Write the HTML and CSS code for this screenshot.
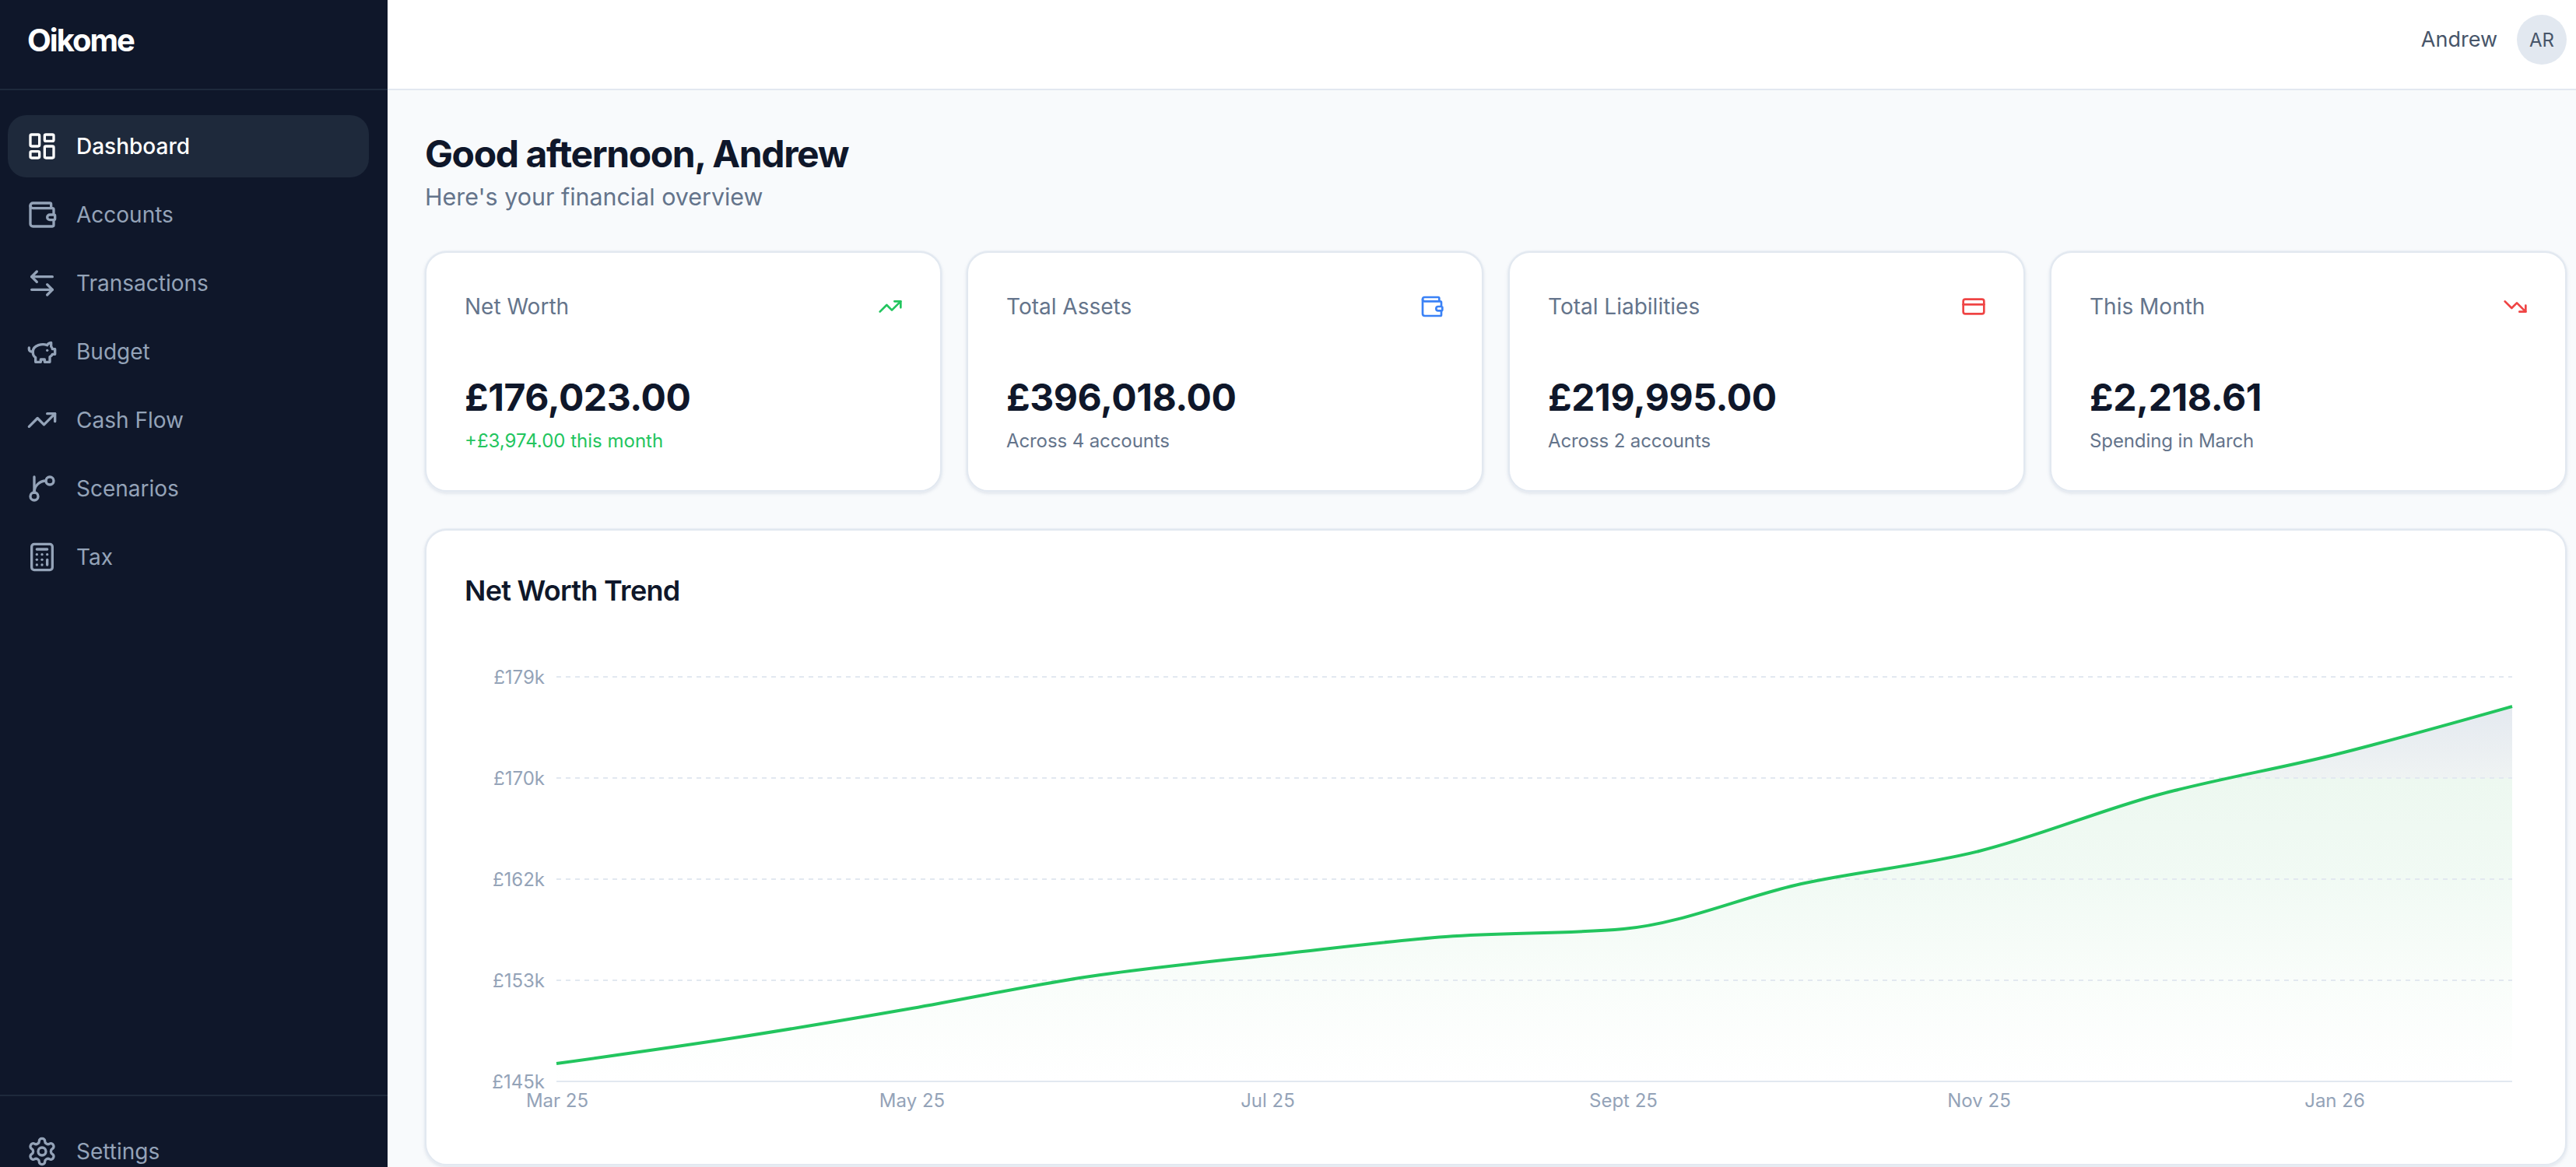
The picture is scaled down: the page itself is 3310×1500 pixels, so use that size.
FILE: index.html
```html
<!DOCTYPE html>
<html lang="en">
<head>
<meta charset="utf-8">
<title>Oikome</title>
<link rel="stylesheet" href="styles.css">
</head>
<body>
<div class="app">
  <aside class="sidebar">
    <div class="brand">Oikome</div>
    <nav class="nav">
      <a class="nav-item active"><svg class="icon" viewBox="0 0 24 24"><rect x="3" y="3" width="7" height="9" rx="1"/><rect x="14" y="3" width="7" height="5" rx="1"/><rect x="14" y="12" width="7" height="9" rx="1"/><rect x="3" y="16" width="7" height="5" rx="1"/></svg><span>Dashboard</span></a>
      <a class="nav-item"><svg class="icon" viewBox="0 0 24 24"><path d="M19 7V4a1 1 0 0 0-1-1H5a2 2 0 0 0 0 4h15a1 1 0 0 1 1 1v4h-3a2 2 0 0 0 0 4h3a1 1 0 0 0 1-1v-2a1 1 0 0 0-1-1"/><path d="M3 5v14a2 2 0 0 0 2 2h15a1 1 0 0 0 1-1v-4"/></svg><span>Accounts</span></a>
      <a class="nav-item"><svg class="icon" viewBox="0 0 24 24"><path d="M8 3 4 7l4 4"/><path d="M4 7h16"/><path d="m16 21 4-4-4-4"/><path d="M20 17H4"/></svg><span>Transactions</span></a>
      <a class="nav-item"><svg class="icon" viewBox="0 0 24 24"><path d="M19 5c-1.5 0-2.8 1.4-3 2-3.5-1.5-11-.3-11 5 0 1.8 0 3 2 4.5V20h4v-2h3v2h4v-4c1-.5 1.7-1 2-2h2v-4h-2c0-1-.5-1.5-1-2V5z"/><path d="M2 9v1c0 1.1.9 2 2 2h1"/><path d="M16 11h.01"/></svg><span>Budget</span></a>
      <a class="nav-item"><svg class="icon" viewBox="0 0 24 24"><path d="M22 7 13.5 15.5 8.5 10.5 2 17"/><path d="M16 7h6v6"/></svg><span>Cash Flow</span></a>
      <a class="nav-item"><svg class="icon" viewBox="0 0 24 24"><path d="M6 3v12"/><circle cx="18" cy="6" r="3"/><circle cx="6" cy="18" r="3"/><path d="M15 6a9 9 0 0 0-9 9"/></svg><span>Scenarios</span></a>
      <a class="nav-item"><svg class="icon" viewBox="0 0 24 24"><rect x="4" y="2" width="16" height="20" rx="2"/><path d="M8 6h8"/><path d="M16 14v4"/><path d="M16 10h.01"/><path d="M12 10h.01"/><path d="M8 10h.01"/><path d="M12 14h.01"/><path d="M8 14h.01"/><path d="M12 18h.01"/><path d="M8 18h.01"/></svg><span>Tax</span></a>
    </nav>
    <div class="sidebar-foot">
      <a class="nav-item"><svg class="icon" viewBox="0 0 24 24"><path d="M12.22 2h-.44a2 2 0 0 0-2 2v.18a2 2 0 0 1-1 1.73l-.43.25a2 2 0 0 1-2 0l-.15-.08a2 2 0 0 0-2.73.73l-.22.38a2 2 0 0 0 .73 2.73l.15.1a2 2 0 0 1 1 1.72v.51a2 2 0 0 1-1 1.74l-.15.09a2 2 0 0 0-.73 2.73l.22.38a2 2 0 0 0 2.73.73l.15-.08a2 2 0 0 1 2 0l.43.25a2 2 0 0 1 1 1.73V20a2 2 0 0 0 2 2h.44a2 2 0 0 0 2-2v-.18a2 2 0 0 1 1-1.73l.43-.25a2 2 0 0 1 2 0l.15.08a2 2 0 0 0 2.73-.73l.22-.39a2 2 0 0 0-.73-2.73l-.15-.08a2 2 0 0 1-1-1.74v-.5a2 2 0 0 1 1-1.74l.15-.09a2 2 0 0 0 .73-2.73l-.22-.38a2 2 0 0 0-2.73-.73l-.15.08a2 2 0 0 1-2 0l-.43-.25a2 2 0 0 1-1-1.73V4a2 2 0 0 0-2-2z"/><circle cx="12" cy="12" r="3"/></svg><span>Settings</span></a>
    </div>
  </aside>
  <div class="main">
    <header class="topbar">
      <span class="user-name">Andrew</span>
      <span class="avatar">AR</span>
    </header>
    <main class="content">
      <h1 class="title">Good afternoon, Andrew</h1>
      <p class="subtitle">Here's your financial overview</p>
      <section class="stats">
        <article class="card stat">
          <div class="stat-head"><span class="stat-label">Net Worth</span><svg class="stat-icon green" viewBox="0 0 24 24"><path d="M22 7 13.5 15.5 8.5 10.5 2 17"/><path d="M16 7h6v6"/></svg></div>
          <div class="stat-value">£176,023.00</div>
          <div class="stat-note green-text">+£3,974.00 this month</div>
        </article>
        <article class="card stat">
          <div class="stat-head"><span class="stat-label">Total Assets</span><svg class="stat-icon blue" viewBox="0 0 24 24"><path d="M19 7V4a1 1 0 0 0-1-1H5a2 2 0 0 0 0 4h15a1 1 0 0 1 1 1v4h-3a2 2 0 0 0 0 4h3a1 1 0 0 0 1-1v-2a1 1 0 0 0-1-1"/><path d="M3 5v14a2 2 0 0 0 2 2h15a1 1 0 0 0 1-1v-4"/></svg></div>
          <div class="stat-value">£396,018.00</div>
          <div class="stat-note">Across 4 accounts</div>
        </article>
        <article class="card stat">
          <div class="stat-head"><span class="stat-label">Total Liabilities</span><svg class="stat-icon red" viewBox="0 0 24 24"><rect x="2" y="5" width="20" height="14" rx="2"/><path d="M2 10h20"/></svg></div>
          <div class="stat-value">£219,995.00</div>
          <div class="stat-note">Across 2 accounts</div>
        </article>
        <article class="card stat">
          <div class="stat-head"><span class="stat-label">This Month</span><svg class="stat-icon red" viewBox="0 0 24 24"><path d="M22 17 13.5 8.5 8.5 13.5 2 7"/><path d="M16 17h6v-6"/></svg></div>
          <div class="stat-value">£2,218.61</div>
          <div class="stat-note">Spending in March</div>
        </article>
      </section>
      <section class="card chart-card">
        <h2 class="chart-title">Net Worth Trend</h2>
        <svg class="chart" viewBox="597 820 2650 640" width="2650" height="640">
          <defs>
            <linearGradient id="areaFill" gradientUnits="userSpaceOnUse" x1="0" y1="908" x2="0" y2="1389">
              <stop offset="0" stop-color="#e4e9f0"/>
              <stop offset="0.191" stop-color="#eff3f3"/>
              <stop offset="0.191" stop-color="#edf8f0"/>
              <stop offset="0.46" stop-color="#f1faf4"/>
              <stop offset="0.73" stop-color="#f9fdfa"/>
              <stop offset="1" stop-color="#ffffff"/>
            </linearGradient>
          </defs>
          <path class="area" d="M715 1367C791.2 1356.4 867.3 1345.8 943.5 1334C1019.7 1322.2 1095.8 1309.3 1172 1296C1248.2 1282.7 1324.3 1266.3 1400.5 1255C1476.7 1243.7 1552.8 1236.3 1629 1228C1705.2 1219.7 1781.3 1209.7 1857.5 1204C1933.7 1198.3 2009.8 1200.7 2086 1194C2162.2 1187.3 2238.3 1152.7 2314.5 1136C2390.7 1119.3 2466.8 1113 2543 1094C2619.2 1075 2695.3 1042.7 2771.5 1022C2847.7 1001.3 2923.8 989 3000 970C3076.2 951 3152 929.5 3228 908V1389H715Z"/>
          <path class="grid" d="M715 870H3228M715 1000H3228M715 1130H3228M715 1260H3228"/>
          <path class="axis" d="M715 1390H3228"/>
          <path class="line" d="M715 1367C791.2 1356.4 867.3 1345.8 943.5 1334C1019.7 1322.2 1095.8 1309.3 1172 1296C1248.2 1282.7 1324.3 1266.3 1400.5 1255C1476.7 1243.7 1552.8 1236.3 1629 1228C1705.2 1219.7 1781.3 1209.7 1857.5 1204C1933.7 1198.3 2009.8 1200.7 2086 1194C2162.2 1187.3 2238.3 1152.7 2314.5 1136C2390.7 1119.3 2466.8 1113 2543 1094C2619.2 1075 2695.3 1042.7 2771.5 1022C2847.7 1001.3 2923.8 989 3000 970C3076.2 951 3152 929.5 3228 908"/>
          <text class="tick y" x="700" y="879">£179k</text>
          <text class="tick y" x="700" y="1009">£170k</text>
          <text class="tick y" x="700" y="1139">£162k</text>
          <text class="tick y" x="700" y="1269">£153k</text>
          <text class="tick y" x="700" y="1399">£145k</text>
          <text class="tick x" x="716" y="1423">Mar 25</text>
          <text class="tick x" x="1172" y="1423">May 25</text>
          <text class="tick x" x="1629" y="1423">Jul 25</text>
          <text class="tick x" x="2086" y="1423">Sept 25</text>
          <text class="tick x" x="2543" y="1423">Nov 25</text>
          <text class="tick x" x="3000" y="1423">Jan 26</text>
        </svg>
      </section>
    </main>
  </div>
</div>
</body>
</html>
```

FILE: styles.css
```css
* { box-sizing: border-box; }
html, body { margin: 0; height: 100%; overflow: hidden; }
body {
  font-family: Inter, "Liberation Sans", sans-serif;
  background: #f8fafc;
  color: #0f172a;
}
.app { display: flex; height: 1540px; }

.sidebar {
  width: 498px;
  flex: none;
  display: flex;
  flex-direction: column;
  background: #0f172a;
}
.brand {
  height: 116px;
  padding: 28px 35px 0;
  border-bottom: 2px solid #1e293b;
  color: #fff;
  font-size: 40px;
  line-height: 48px;
  font-weight: 700;
  letter-spacing: -2px;
}
.nav {
  flex: 1;
  display: flex;
  flex-direction: column;
  gap: 8px;
  padding: 32px 24px 0 10px;
}
.nav-item {
  display: flex;
  align-items: center;
  gap: 24px;
  height: 80px;
  padding: 0 24px;
  border-radius: 24px;
  color: #94a3b8;
  font-size: 28px;
  font-weight: 400;
}
.nav-item.active { background: #1e293b; color: #fff; font-weight: 500; }
.icon, .stat-icon {
  flex: none;
  fill: none;
  stroke: currentColor;
  stroke-width: 2;
  stroke-linecap: round;
  stroke-linejoin: round;
}
.icon { width: 40px; height: 40px; }
.sidebar-foot {
  height: 133px;
  padding: 31px 24px 0 10px;
  border-top: 2px solid #1e293b;
}

.main { flex: 1; min-width: 0; display: flex; flex-direction: column; }
.topbar {
  height: 116px;
  flex: none;
  display: flex;
  justify-content: flex-end;
  align-items: flex-start;
  gap: 25px;
  padding: 19px 12px 0 0;
  background: #fff;
  border-bottom: 2px solid #e2e8f0;
}
.user-name { font-size: 27px; line-height: 64px; color: #475569; }
.avatar {
  width: 64px;
  height: 64px;
  border-radius: 50%;
  background: #e2e8f0;
  color: #475569;
  font-size: 24px;
  font-weight: 400;
  display: flex;
  align-items: center;
  justify-content: center;
}

.content { padding: 50px 12px 0 48px; }
.title { margin: 0; font-size: 48px; line-height: 64px; font-weight: 700; color: #0f172a; letter-spacing: -1.4px; }
.subtitle { margin: 0; padding-top: 1px; font-size: 30.4px; line-height: 44px; color: #64748b; }

.card {
  background: #fff;
  border: 2px solid #e2e8f0;
  border-radius: 28px;
  box-shadow: 0 0 0 1px #e9eef4, 0 2px 4px rgba(148, 163, 184, 0.3);
}
.stats {
  display: grid;
  grid-template-columns: repeat(4, 1fr);
  gap: 32px;
  margin-top: 48px;
}
.stat { height: 309px; padding: 49px 48px 48px 49px; }
.stat-head { display: flex; justify-content: space-between; align-items: center; height: 40px; }
.stat-label { font-size: 28px; color: #64748b; }
.stat-icon { width: 32px; height: 32px; }
.green { color: #22c55e; }
.blue { color: #3b82f6; }
.red { color: #ef4444; }
.stat-value { margin-top: 65px; font-size: 48px; line-height: 64px; font-weight: 700; color: #0f172a; letter-spacing: -0.4px; }
.stat-note { margin-top: 6px; font-size: 24px; line-height: 36px; color: #64748b; letter-spacing: -0.1px; }
.stat-note.green-text { color: #22c55e; letter-spacing: 0; }

.chart-card { margin-top: 48px; height: 818px; padding: 49px 49px 0; }
.chart-title { margin: 0 0 33px; font-size: 36px; line-height: 56px; font-weight: 600; color: #0f172a; letter-spacing: -0.7px; }
.chart { display: block; }
.area { fill: url(#areaFill); }
.grid { fill: none; stroke: #e2e8f0; stroke-width: 2; stroke-dasharray: 6 6; }
.axis { fill: none; stroke: #e2e8f0; stroke-width: 2; }
.line { fill: none; stroke: #22c55e; stroke-width: 4; }
.tick { font-family: Inter, "Liberation Sans", sans-serif; font-size: 24px; fill: #94a3b8; }
.tick.y { text-anchor: end; }
.tick.x { text-anchor: middle; }
```
